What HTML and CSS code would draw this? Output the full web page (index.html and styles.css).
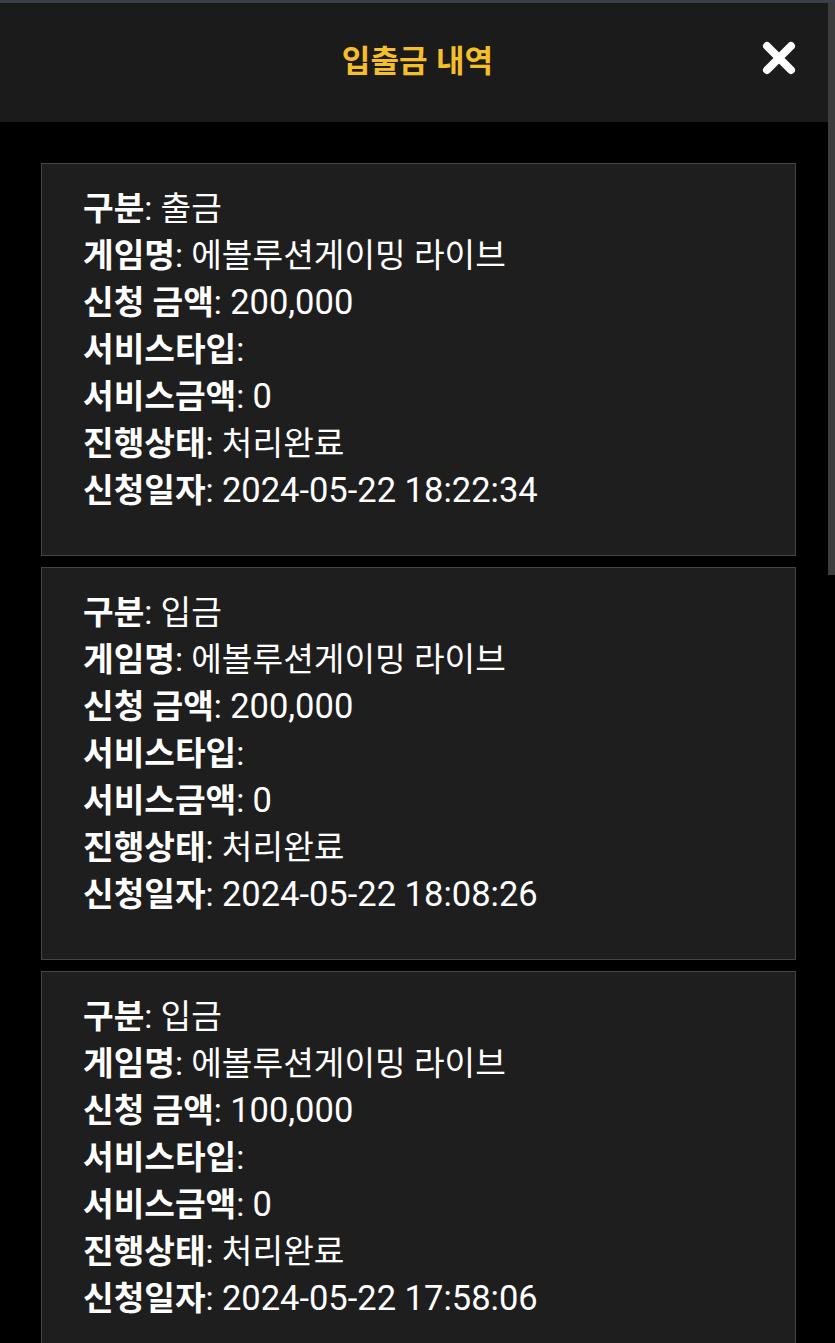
FILE: index.html
```html
<!DOCTYPE html>
<html lang="ko">
<head>
    <meta charset="UTF-8">
    <meta name="viewport" content="width=device-width, initial-scale=1.0">
    <title>입출금 내역</title>
    <link rel="stylesheet" href="styles.css">
</head>
<body>
    <div class="topline"></div>
    <div class="modal">
        <div class="modal-header">
            <h1>입출금 내역</h1>
            <button class="close-btn" aria-label="닫기">
                <svg width="36" height="36" viewBox="0 0 36 36">
                    <path d="M6 6 L30 30 M30 6 L6 30" stroke="#fff" stroke-width="8" stroke-linecap="round"/>
                </svg>
            </button>
        </div>

        <div class="history-list">
            <div class="history-item">
                <p><b>구분</b>: 출금</p>
                <p><b>게임명</b>: 에볼루션게이밍 라이브</p>
                <p><b>신청 금액</b>: <span class="num">200,000</span></p>
                <p><b>서비스타입</b>:</p>
                <p><b>서비스금액</b>: <span class="num">0</span></p>
                <p><b>진행상태</b>: 처리완료</p>
                <p><b>신청일자</b>: <span class="num">2024-05-22 18:22:34</span></p>
            </div>
            <div class="history-item">
                <p><b>구분</b>: 입금</p>
                <p><b>게임명</b>: 에볼루션게이밍 라이브</p>
                <p><b>신청 금액</b>: <span class="num">200,000</span></p>
                <p><b>서비스타입</b>:</p>
                <p><b>서비스금액</b>: <span class="num">0</span></p>
                <p><b>진행상태</b>: 처리완료</p>
                <p><b>신청일자</b>: <span class="num">2024-05-22 18:08:26</span></p>
            </div>
            <div class="history-item">
                <p><b>구분</b>: 입금</p>
                <p><b>게임명</b>: 에볼루션게이밍 라이브</p>
                <p><b>신청 금액</b>: <span class="num">100,000</span></p>
                <p><b>서비스타입</b>:</p>
                <p><b>서비스금액</b>: <span class="num">0</span></p>
                <p><b>진행상태</b>: 처리완료</p>
                <p><b>신청일자</b>: <span class="num">2024-05-22 17:58:06</span></p>
            </div>
        </div>
    </div>
    <div class="scroll-thumb"></div>
</body>
</html>
```

FILE: styles.css
```css
body {
    margin: 0;
    padding: 0;
    background-color: #000;
    color: #fff;
    font-family: Roboto, "Noto Sans CJK KR", sans-serif;
    overflow: hidden;
}
.topline {
    height: 3px;
    background-color: #3b4046;
}
.modal-header {
    height: 119px;
    box-sizing: border-box;
    padding-bottom: 8px;
    background-color: #1b1b1b;
    display: flex;
    align-items: center;
    justify-content: center;
    position: relative;
}
.modal-header h1 {
    margin: 0;
    color: #f5bf2a;
    font-family: "Noto Sans CJK KR", sans-serif;
    font-size: 31px;
    font-weight: bold;
}
.close-btn {
    position: absolute;
    right: 38px;
    top: 37px;
    padding: 0;
    border: none;
    background: none;
    cursor: pointer;
}
.close-btn svg {
    display: block;
}
.history-list {
    padding: 41px 39px 0 41px;
    display: flex;
    flex-direction: column;
    gap: 11px;
}
.history-item {
    background-color: #1e1e1e;
    border: 1px solid #454545;
    padding: 21px 41px 41px;
}
.history-item p {
    margin: 0;
    height: 47px;
    font-size: 33.3px;
    line-height: 47px;
    white-space: nowrap;
}
.history-item b {
    font-weight: bold;
}
.history-item .num {
    font-size: 34.5px;
}
.scroll-thumb {
    position: absolute;
    top: 3px;
    right: 0;
    width: 7px;
    height: 572px;
    background-color: #3d3d3d;
}
```
